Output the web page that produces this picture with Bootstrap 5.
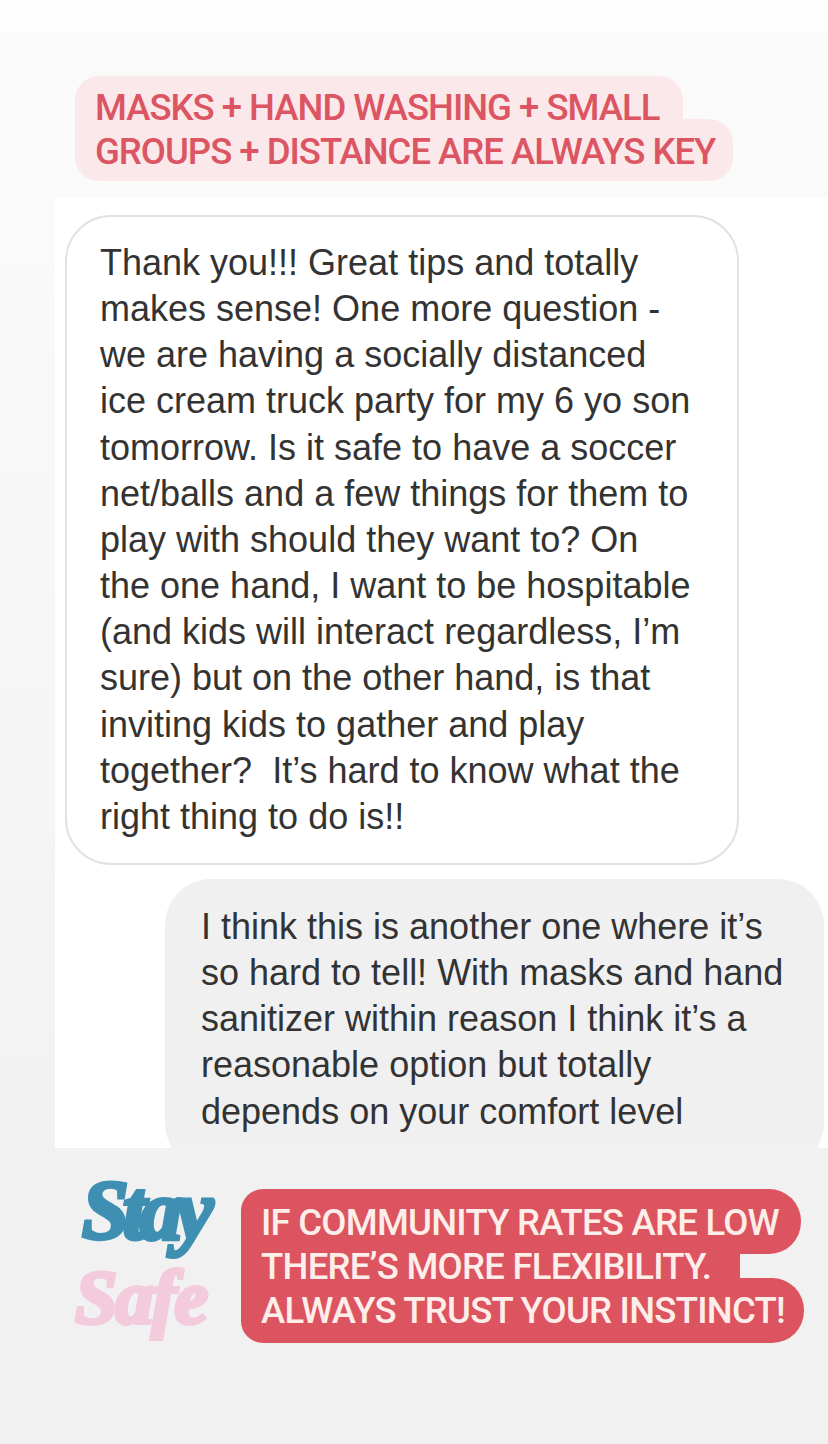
<!DOCTYPE html>
<html lang="en">
<head>
  <meta charset="UTF-8">
  <title>Stay Safe</title>
  <meta name="viewport" content="width=device-width, initial-scale=1" />
  <link href="https://cdn.jsdelivr.net/npm/bootstrap@5.3.2/dist/css/bootstrap.min.css" rel="stylesheet">
  <style>
    body {
      margin: 0;
      height: 1444px;
      overflow: hidden;
      background: linear-gradient(#fbfafb 0, #fbfafb 200px, #f5f5f5 800px, #f1f1f2 1200px);
    }
    .top-strip { height: 32px; background: #fefefe; }
    .tag-area { height: 166px; padding: 44px 0 0 75px; }
    .tag-line {
      font-family: "Roboto", "Liberation Sans", sans-serif;
      font-size: 36.5px;
      font-weight: 500;
      line-height: 43px;
      white-space: nowrap;
      padding: 0 20px;
    }
    .tag-pink { color: #dc5563; background: #fbe8ea; letter-spacing: -1px; }
    .tag-pink.first { padding-top: 10px; padding-bottom: 8px; border-radius: 24px 24px 0 0; width: 608px; }
    .tag-pink.second { margin-top: -18px; padding-top: 11px; padding-bottom: 8px; border-radius: 0 24px 24px 24px; width: 658px; }
    .chat-panel { height: 950px; margin-left: 55px; background: #fff; overflow: hidden; padding: 17px 4px 0 10px; }
    .chat-bubble {
      font-family: "Liberation Sans", Arial, sans-serif;
      font-size: 36px;
      line-height: 46.15px;
      color: #333;
      white-space: nowrap;
      border-radius: 46px;
    }
    .bubble-in { width: 674px; height: 650px; border: 2px solid #e2e2e2; padding: 23px 0 0 33px; }
    .bubble-out { margin: 14px 0 0 100px; height: 290px; padding: 25px 0 0 36px; background: #f0f0f0; }
    .promo-area { padding: 41px 0 0 75px; }
    .stay-safe {
      width: 166px;
      margin-top: -16px;
      font-family: "Liberation Serif", serif;
      font-weight: 700;
      font-style: italic;
      -webkit-text-stroke: 4px currentColor;
    }
    .stay-word { color: #3f8fb3; padding-left: 7px; font-size: 84px; line-height: 80px; letter-spacing: -6px; margin-top: -2px; }
    .safe-word { color: #f3cbdd; font-size: 76px; line-height: 76px; letter-spacing: -2px; margin-top: 8px; }
    .tag-red { color: #fdeee9; background: #dc5460; line-height: 44px; letter-spacing: -0.75px; }
    .tag-red.l1 { width: 560px; padding-top: 12px; padding-bottom: 9px; border-radius: 22px 32px 32px 0; position: relative; z-index: 1; }
    .tag-red.l2 { width: 499px; margin-top: -9px; position: relative; z-index: 2; }
    .tag-red.l3 { width: 563px; margin-top: -11px; padding-top: 11px; padding-bottom: 10px; border-radius: 0 32px 32px 22px; }
  </style>
</head>
<body>
  <div class="top-strip"></div>

  <div class="tag-area">
    <div class="tag-line tag-pink first">MASKS + HAND WASHING + SMALL</div>
    <div class="tag-line tag-pink second">GROUPS + DISTANCE ARE ALWAYS KEY</div>
  </div>

  <div class="chat-panel">
    <div class="chat-bubble bubble-in">
      Thank you!!! Great tips and totally<br>
      makes sense! One more question -<br>
      we are having a socially distanced<br>
      ice cream truck party for my 6 yo son<br>
      tomorrow. Is it safe to have a soccer<br>
      net/balls and a few things for them to<br>
      play with should they want to? On<br>
      the one hand, I want to be hospitable<br>
      (and kids will interact regardless, I’m<br>
      sure) but on the other hand, is that<br>
      inviting kids to gather and play<br>
      together?&nbsp; It’s hard to know what the<br>
      right thing to do is!!
    </div>
    <div class="chat-bubble bubble-out">
      I think this is another one where it’s<br>
      so hard to tell! With masks and hand<br>
      sanitizer within reason I think it’s a<br>
      reasonable option but totally<br>
      depends on your comfort level
    </div>
  </div>

  <div class="promo-area d-flex align-items-start">
    <div class="stay-safe">
      <div class="stay-word">Stay</div>
      <div class="safe-word">Safe</div>
    </div>
    <div>
      <div class="tag-line tag-red l1">IF COMMUNITY RATES ARE LOW</div>
      <div class="tag-line tag-red l2">THERE’S MORE FLEXIBILITY.</div>
      <div class="tag-line tag-red l3">ALWAYS TRUST YOUR INSTINCT!</div>
    </div>
  </div>

  <script src="https://cdn.jsdelivr.net/npm/bootstrap@5.3.2/dist/js/bootstrap.bundle.min.js"></script>
</body>
</html>
